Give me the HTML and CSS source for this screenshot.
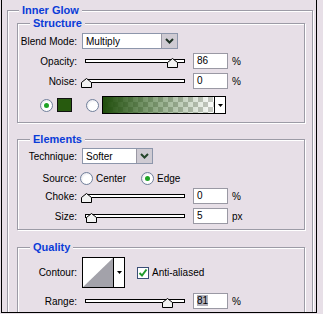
FILE: index.html
```html
<!DOCTYPE html>
<html>
<head>
<meta charset="utf-8">
<title>Inner Glow</title>
<link rel="stylesheet" href="styles.css">
</head>
<body>
<div class="window">
  <fieldset class="group outer">
    <legend>Inner Glow</legend>

    <fieldset class="group structure">
      <legend>Structure</legend>
      <div class="row">
        <span class="lbl">Blend Mode:</span>
        <div class="select blend">
          <span class="value">Multiply</span>
          <span class="btn"><svg width="9" height="6" viewBox="0 0 9 6"><path d="M1 1l3.5 3.5L8 1" fill="none" stroke="#1f3326" stroke-width="2"/></svg></span>
        </div>
      </div>
      <div class="row gap4">
        <span class="lbl">Opacity:</span>
        <div class="slider">
          <div class="track"></div>
          <svg class="thumb" style="left:86px" width="11" height="10" viewBox="0 0 11 10"><path d="M.5 9.5v-5l5-4 5 4v5z" fill="#f2f2f2" stroke="#000"/></svg>
        </div>
        <span class="field">86</span><span class="unit">%</span>
      </div>
      <div class="row gap4">
        <span class="lbl">Noise:</span>
        <div class="slider">
          <div class="track"></div>
          <svg class="thumb" style="left:0px" width="11" height="10" viewBox="0 0 11 10"><path d="M.5 9.5v-5l5-4 5 4v5z" fill="#f2f2f2" stroke="#000"/></svg>
        </div>
        <span class="field">0</span><span class="unit">%</span>
      </div>
      <div class="row colors">
        <span class="radio on"></span>
        <span class="swatch"></span>
        <span class="radio ramp-radio"></span>
        <div class="picker">
          <span class="ramp"></span>
          <span class="arrow"><svg width="5" height="3" viewBox="0 0 5 3"><path d="M0 0h5L2.5 3z"/></svg></span>
        </div>
      </div>
    </fieldset>

    <fieldset class="group elements">
      <legend>Elements</legend>
      <div class="row">
        <span class="lbl">Technique:</span>
        <div class="select technique">
          <span class="value">Softer</span>
          <span class="btn"><svg width="9" height="6" viewBox="0 0 9 6"><path d="M1 1l3.5 3.5L8 1" fill="none" stroke="#24452a" stroke-width="2"/></svg></span>
        </div>
      </div>
      <div class="row gap6">
        <span class="lbl">Source:</span>
        <span class="radio first"></span><span class="opt">Center</span>
        <span class="radio on second"></span><span class="opt">Edge</span>
      </div>
      <div class="row gap2">
        <span class="lbl">Choke:</span>
        <div class="slider">
          <div class="track"></div>
          <svg class="thumb" style="left:0px" width="11" height="10" viewBox="0 0 11 10"><path d="M.5 9.5v-5l5-4 5 4v5z" fill="#f2f2f2" stroke="#000"/></svg>
        </div>
        <span class="field">0</span><span class="unit">%</span>
      </div>
      <div class="row gap4">
        <span class="lbl">Size:</span>
        <div class="slider">
          <div class="track"></div>
          <svg class="thumb" style="left:5px" width="11" height="10" viewBox="0 0 11 10"><path d="M.5 9.5v-5l5-4 5 4v5z" fill="#f2f2f2" stroke="#000"/></svg>
        </div>
        <span class="field">5</span><span class="unit">px</span>
      </div>
    </fieldset>

    <fieldset class="group quality">
      <legend>Quality</legend>
      <div class="row contour-row">
        <span class="lbl">Contour:</span>
        <div class="contour">
          <svg class="curve" width="30" height="29" viewBox="0 0 30 29"><rect width="30" height="29" fill="#fff"/><path d="M0 29L30 0v29z" fill="#a3a2aa"/></svg>
          <span class="arrow"><svg width="5" height="3" viewBox="0 0 5 3"><path d="M0 0h5L2.5 3z"/></svg></span>
        </div>
        <span class="check"><svg width="10" height="10" viewBox="0 0 10 10"><path d="M1.5 5l2.5 2.5L8.5 1.5" fill="none" stroke="#1f9a2a" stroke-width="2"/></svg></span>
        <span class="opt">Anti-aliased</span>
      </div>
      <div class="row gap5">
        <span class="lbl">Range:</span>
        <div class="slider">
          <div class="track"></div>
          <svg class="thumb" style="left:81px" width="11" height="10" viewBox="0 0 11 10"><path d="M.5 9.5v-5l5-4 5 4v5z" fill="#f2f2f2" stroke="#000"/></svg>
        </div>
        <span class="field"><span class="sel">81</span></span><span class="unit">%</span>
      </div>
    </fieldset>
  </fieldset>
</div>
</body>
</html>
```

FILE: styles.css
```css
body {
   margin: 0;
   background-color: #e7dfe7;
   font-family: "Liberation Sans", Arial, sans-serif;
   font-size: 10px;
   color: #000;
}

.window {
   width: 314px;
   height: 308px;
   margin-left: 1px;
   padding-top: 4px;
   border-left: 1px solid #000;
   border-right: 1px solid #000;
   border-bottom: 1px solid #000;
   overflow: hidden;
}

/* etched group boxes */
.group {
   margin: 0;
   padding: 0;
   min-inline-size: 0;
   border: 1px solid #9c9ba6;
   box-shadow: inset 1px 1px 0 #fff, 1px 1px 0 #fff;
}

.group > legend {
   margin-left: 12px;
   padding: 0 3px;
   font-size: 11px;
   font-weight: bold;
   line-height: 13px;
   color: #0a3cd8;
   background-color: #e7dfe7;
}

.outer {
   margin: 0 3px 0 5px;
   padding: 0 7px 40px 9px;
}

.outer > legend {
   margin-left: 2px;
}

.structure {
   padding: 3px 0 8px;
}

.elements {
   margin-top: 10px;
   padding: 2px 0 5px;
}

.quality {
   margin-top: 11px;
   padding: 3px 0 30px;
}

/* rows */
.row {
   display: flex;
   align-items: center;
   height: 16px;
}

.gap2 { margin-top: 2px; }
.gap4 { margin-top: 4px; }
.gap5 { margin-top: 5px; }
.gap6 { margin-top: 6px; }

.lbl {
   flex: none;
   width: 59px;
   margin-right: 4px;
   text-align: right;
   white-space: nowrap;
}

/* dropdowns */
.select {
   display: flex;
   align-items: center;
   flex: none;
   box-sizing: border-box;
   height: 16px;
   margin-left: 1px;
   border: 1px solid #8d96ab;
   background-color: #fff;
}

.blend { width: 96px; }
.technique { width: 71px; }

.select .value {
   flex: 1;
   padding-left: 3px;
}

.select .btn {
   display: flex;
   align-items: center;
   justify-content: center;
   box-sizing: border-box;
   width: 16px;
   height: 14px;
   border-left: 1px solid #9a98a4;
   background-color: #cfcbd3;
}

/* sliders */
.slider {
   position: relative;
   flex: none;
   width: 108px;
   height: 16px;
}

.slider .track {
   height: 2px;
   margin: 6px 4px 0;
   border: 1px solid #000;
   background-color: #fff;
}

.slider .thumb {
   position: absolute;
   top: 5px;
}

.field {
   flex: none;
   box-sizing: border-box;
   width: 35px;
   height: 16px;
   margin-left: 4px;
   padding-left: 3px;
   border: 1px solid #9a99a4;
   background-color: #fff;
   line-height: 14px;
}

.field .sel {
   background-color: #b3b2bc;
}

.unit {
   margin-left: 4px;
}

/* radios and check */
.radio {
   display: flex;
   align-items: center;
   justify-content: center;
   flex: none;
   box-sizing: border-box;
   width: 13px;
   height: 13px;
   border: 1px solid #72819c;
   border-radius: 50%;
   background: radial-gradient(circle at 60% 60%, #fff 45%, #d5d4de 100%);
}

.radio.on::after {
   content: "";
   width: 5px;
   height: 5px;
   border-radius: 50%;
   background-color: #1ea326;
}

.radio.first { margin-left: -1px; }
.radio.second { margin-left: 15px; }

.opt {
   margin-left: 3px;
}

.check {
   display: flex;
   align-items: center;
   justify-content: center;
   flex: none;
   box-sizing: border-box;
   width: 12px;
   height: 12px;
   margin-left: 12px;
   border: 1px solid #3a4e76;
   background-color: #fff;
}

/* colour row */
.colors {
   height: 18px;
   margin-top: 7px;
   padding-left: 22px;
}

.swatch {
   flex: none;
   box-sizing: border-box;
   width: 15px;
   height: 14px;
   margin-left: 4px;
   border: 1px solid #111;
   background-color: #275a0e;
}

.ramp-radio {
   margin-left: 14px;
}

.picker {
   display: flex;
   box-sizing: border-box;
   width: 124px;
   height: 18px;
   margin-left: 3px;
   border: 1px solid #000;
}

.picker .ramp {
   flex: 1;
   background:
      linear-gradient(to right, #1f4d0b, rgba(40, 90, 20, 0.55) 45%, rgba(40, 90, 20, 0) 100%),
      repeating-conic-gradient(#c9cbc6 0 25%, #fff 0 50%) 0 0 / 10px 10px;
}

.arrow {
   display: flex;
   align-items: center;
   justify-content: center;
   width: 10px;
   border-left: 1px solid #000;
   background-color: #fff;
}

/* contour */
.contour-row {
   height: 31px;
}

.contour {
   display: flex;
   flex: none;
   box-sizing: border-box;
   height: 31px;
   margin-left: 1px;
   border: 1px solid #000;
}

.curve {
   display: block;
}
```
